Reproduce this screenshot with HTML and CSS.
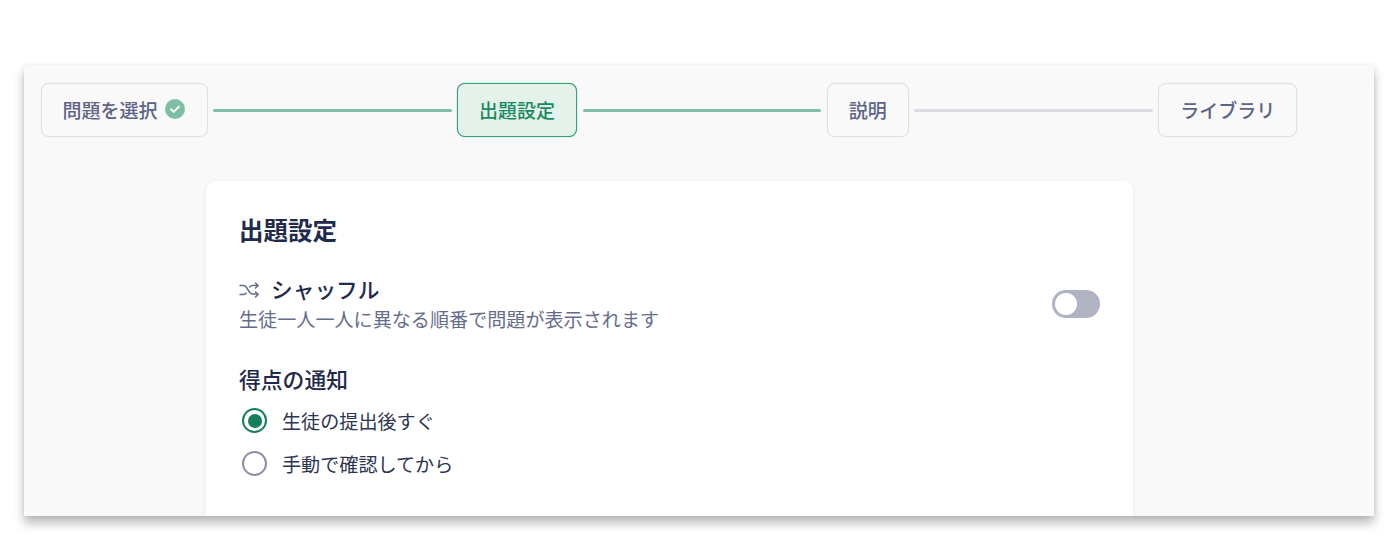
FILE: index.html
```html
<!DOCTYPE html>
<html lang="ja">
<head>
    <meta charset="UTF-8">
    <meta name="viewport" content="width=device-width, initial-scale=1.0">
    <title>出題設定</title>
    <link rel="stylesheet" href="styles.css">
</head>
<body>
    <div class="window">
        <div class="steps">
            <div class="step">
                問題を選択
                <svg class="step-check" width="20" height="20" viewBox="0 0 20 20">
                    <circle cx="10" cy="10" r="10" fill="#7dbfa4"/>
                    <path d="M6 10.3l2.7 2.6L14 7.6" fill="none" stroke="#fff" stroke-width="2" stroke-linecap="round" stroke-linejoin="round"/>
                </svg>
            </div>
            <div class="line line-done"></div>
            <div class="step step-active">出題設定</div>
            <div class="line line-done"></div>
            <div class="step">説明</div>
            <div class="line"></div>
            <div class="step">ライブラリ</div>
        </div>

        <div class="card">
            <h1>出題設定</h1>

            <div class="setting">
                <div>
                    <div class="setting-title">
                        <svg width="20" height="20" viewBox="0 0 20 20" fill="none" stroke="#666d8a" stroke-width="1.5" stroke-linecap="round" stroke-linejoin="round">
                            <path d="M1 5.5h3.5c1.2 0 2 .5 2.7 1.5l3.6 5.5c.7 1 1.5 1.5 2.7 1.5H19"/>
                            <path d="M1 14.5h3.5c1.2 0 2-.5 2.7-1.5M10.8 7c.7-1 1.500-1.500 2.700-1.500H19"/>
                            <path d="M16.500 3L19 5.500L16.500 8M16.500 12L19 14.500L16.500 17"/>
                        </svg>
                        <span>シャッフル</span>
                    </div>
                    <p class="setting-desc">生徒一人一人に異なる順番で問題が表示されます</p>
                </div>
                <div class="toggle"><div class="toggle-knob"></div></div>
            </div>

            <h2>得点の通知</h2>
            <div class="radio-row">
                <div class="radio radio-on"><div class="radio-dot"></div></div>
                <span>生徒の提出後すぐ</span>
            </div>
            <div class="radio-row">
                <div class="radio"></div>
                <span>手動で確認してから</span>
            </div>
        </div>
    </div>
</body>
</html>
```

FILE: styles.css
```css
html, body {
    height: 100%;
}
body {
    margin: 0;
    padding: 65px 26px 44px 24px;
    box-sizing: border-box;
    overflow: hidden;
    background-color: #fff;
    font-family: Inter, "Noto Sans CJK JP", sans-serif;
    color: #1f2a4d;
}
.window {
    height: 451px;
    background-color: #f9f9f9;
    box-shadow: 0 7px 10px rgba(0,0,0,0.28), 0 0 4px rgba(0,0,0,0.08);
    overflow: hidden;
}
.steps {
    display: flex;
    align-items: center;
    gap: 5.5px;
    padding: 18px 17px 0 16.6px;
}
.step {
    display: flex;
    align-items: center;
    gap: 8px;
    height: 54px;
    box-sizing: border-box;
    padding: 0 21px 2px;
    border: 1px solid #dddfe9;
    border-radius: 8px;
    box-shadow: 0 0 1px #dddfe9;
    font-size: 19px;
    font-weight: 500;
    color: #5d6485;
}
.step-check {
    margin: 0 1px 0 -1px;
}
.step-active {
    background-color: #e5f2eb;
    border-color: #2ea273;
    box-shadow: 0 0 1px #2ea273;
    color: #178a5f;
}
.line {
    width: 238.5px;
    height: 3px;
    border-radius: 2px;
    background-color: #dadbe8;
}
.line-done {
    background-color: #7fbfa5;
}
.card {
    width: 927px;
    height: 400px;
    box-sizing: border-box;
    margin: 44px 0 0 182px;
    padding: 33px 33px 0;
    background-color: #fff;
    border-radius: 10px;
    box-shadow: 0 1px 6px rgba(30,40,80,0.06);
}
h1 {
    margin: 0;
    font-size: 24.5px;
    font-weight: 700;
    line-height: 34px;
}
.setting {
    display: flex;
    justify-content: space-between;
    align-items: center;
    margin-top: 27px;
}
.setting-title {
    display: flex;
    align-items: center;
    gap: 12px;
    font-size: 21.7px;
    font-weight: 500;
    line-height: 30px;
}
.setting-desc {
    margin: 1px 0 0;
    font-size: 19.1px;
    line-height: 28px;
    color: #666d8a;
}
.toggle {
    width: 48px;
    height: 28px;
    margin-bottom: 2px;
    border-radius: 14px;
    padding: 3px;
    box-sizing: border-box;
    background-color: #b0b4c2;
}
.toggle-knob {
    width: 22px;
    height: 22px;
    border-radius: 50%;
    background-color: #fff;
}
h2 {
    margin: 31px 0 0;
    font-size: 21.8px;
    font-weight: 500;
    line-height: 30px;
}
.radio-row {
    display: flex;
    align-items: center;
    gap: 15px;
    height: 43px;
    padding-left: 3px;
    font-size: 19.1px;
    color: #2b3553;
}
h2 + .radio-row {
    margin-top: 4px;
}
.radio {
    display: flex;
    justify-content: center;
    align-items: center;
    width: 25px;
    height: 25px;
    box-sizing: border-box;
    border: 2px solid #8b90a6;
    border-radius: 50%;
    background-color: #fff;
}
.radio-on {
    border-color: #137f5c;
}
.radio-dot {
    width: 14px;
    height: 14px;
    border-radius: 50%;
    background-color: #137f5c;
}
```
